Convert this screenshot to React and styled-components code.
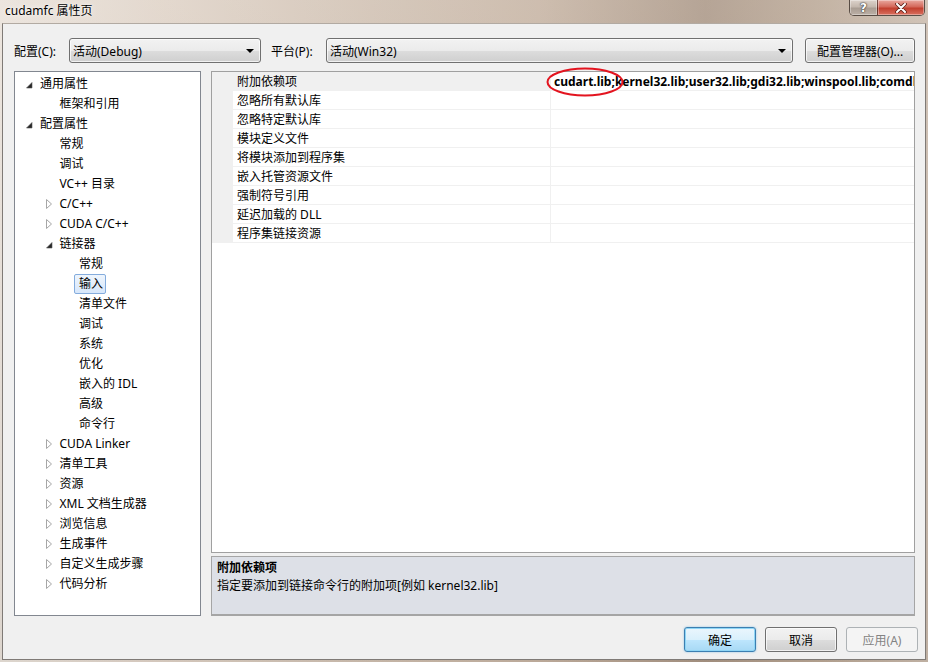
import React from 'react';
import styled, {createGlobalStyle} from 'styled-components';

const Global = createGlobalStyle`
  html, body {
    margin: 0;
    padding: 0;
    width: 928px;
    height: 662px;
    overflow: hidden;
    font-family: "Noto Sans", "Noto Sans CJK SC", sans-serif;
    font-size: 12px;
    color: #000;
  }
`;

const Window = styled.div`
  width: 928px;
  height: 662px;
  display: flex;
  flex-direction: column;
  box-sizing: border-box;
  background:
    linear-gradient(180deg, rgba(255,255,255,0.15) 0%, rgba(0,0,0,0.05) 100%),
    linear-gradient(90deg, #e9e1d9 0%, #ded1c5 18%, #cfbfb0 40%, #c5b2a1 58%, #a99584 76%, #b9a694 88%, #c9b9ab 100%);
`;

const TitleBar = styled.div`
  height: 23px;
  display: flex;
  align-items: flex-start;
  justify-content: space-between;
  flex-shrink: 0;
`;

const Title = styled.div`
  padding: 3px 0 0 5px;
  font-size: 12px;
  line-height: 16px;
  color: #000;
  text-shadow: 0 0 6px rgba(255,255,255,0.9), 0 0 2px rgba(255,255,255,0.9);
`;

const Caption = styled.div`
  display: flex;
  margin-right: 3px;
  border: 1px solid rgba(40,30,25,0.7);
  border-top: 0;
  border-radius: 0 0 5px 5px;
  overflow: hidden;
`;

const CaptionButton = styled.div`
  width: ${p => p.$w}px;
  height: 15px;
  display: flex;
  align-items: center;
  justify-content: center;
  background: ${p => p.$close
    ? 'linear-gradient(180deg, #e9a99f 0%, #d4685a 45%, #c2402f 55%, #d9705f 100%)'
    : 'linear-gradient(180deg, #ddd3cb 0%, #c4b8ae 45%, #a99d93 55%, #bcb0a6 100%)'};
  box-shadow: inset 0 0 0 1px rgba(255,255,255,0.35);
  & + & {
    border-left: 1px solid rgba(40,30,25,0.6);
  }
`;

const HelpGlyph = styled.span`
  font-family: "DejaVu Sans", sans-serif;
  font-weight: bold;
  font-size: 12px;
  line-height: 12px;
  color: #fff;
  text-shadow: 0 0 1px #333, 0 0 1px #333, 0 0 2px #555;
`;

const Client = styled.div`
  flex: 1;
  margin: 0 2px 2px 2px;
  border: 1px solid #7f7a76;
  border-top-color: #b2aaa2;
  background: #f0f0f0;
  display: flex;
  flex-direction: column;
  padding: 14px 10px 7px 11px;
  min-height: 0;
`;

const TopRow = styled.div`
  display: flex;
  align-items: center;
  height: 25px;
`;

const FieldLabel = styled.div`
  width: 55px;
  flex-shrink: 0;
`;

const Combo = styled.div`
  position: relative;
  box-sizing: border-box;
  width: ${p => p.$w ? `${p.$w}px` : 'auto'};
  flex: ${p => p.$w ? '0 0 auto' : '1'};
  height: 25px;
  margin-right: ${p => p.$gap}px;
  border: 1px solid #707070;
  border-radius: 3px;
  padding-left: 3px;
  display: flex;
  align-items: center;
  background: linear-gradient(180deg, #f2f2f2 0%, #ebebeb 50%, #dddddd 50%, #cfcfcf 100%);
  box-shadow: inset 0 0 0 1px rgba(255,255,255,0.7);
`;

const ComboArrow = styled.span`
  position: absolute;
  right: 6px;
  top: 10px;
  width: 0;
  height: 0;
  border-left: 4px solid transparent;
  border-right: 4px solid transparent;
  border-top: 4px solid #000;
`;

const Button = styled.div`
  box-sizing: border-box;
  width: ${p => p.$w}px;
  height: 25px;
  display: flex;
  align-items: center;
  justify-content: center;
  border-radius: 3px;
  border: 1px solid ${p => p.$default ? '#3c7fb1' : p.$disabled ? '#adb2b5' : '#707070'};
  color: ${p => p.$disabled ? '#838383' : '#000'};
  background: ${p => p.$default
    ? 'linear-gradient(180deg, #eaf6fd 0%, #d9f0fc 50%, #bee6fd 50%, #a7d9f5 100%)'
    : p.$disabled
      ? '#f4f4f4'
      : 'linear-gradient(180deg, #f2f2f2 0%, #ebebeb 50%, #dddddd 50%, #cfcfcf 100%)'};
  box-shadow: ${p => p.$default
    ? 'inset 0 0 0 1px #8fd6f6, 0 0 2px rgba(60,160,220,0.6)'
    : p.$disabled ? 'none' : 'inset 0 0 0 1px rgba(255,255,255,0.7)'};
`;

const Main = styled.div`
  display: flex;
  height: 545px;
  margin-top: 8px;
  gap: 10px;
`;

const Tree = styled.div`
  box-sizing: border-box;
  width: 187px;
  flex-shrink: 0;
  border: 1px solid #828790;
  background: #fff;
  padding-top: 2px;
`;

const TreeRow = styled.div`
  height: 20px;
  display: flex;
  align-items: center;
  padding-left: ${p => 9 + p.$level * 19.5}px;
`;

const Toggle = styled.span`
  width: 16px;
  flex-shrink: 0;
  display: flex;
  align-items: center;
  padding-left: 2px;
  box-sizing: border-box;
`;

const TreeText = styled.span`
  white-space: nowrap;
  line-height: 18px;
  ${p => p.$selected && `
    margin-left: -5px;
    padding: 0 2px 0 4px;
    border: 1px solid #84acdd;
    border-radius: 2px;
    background: linear-gradient(180deg, #eef5fd 0%, #d7e7fb 100%);
  `}
`;

const RightCol = styled.div`
  position: relative;
  flex: 1;
  display: flex;
  flex-direction: column;
  gap: 3px;
`;

const Grid = styled.div`
  flex: 1;
  border: 1px solid #a0a0a0;
  background: #fff;
  display: grid;
  grid-template-columns: 21px 318px 1fr;
  grid-auto-rows: 19px;
  align-content: start;
`;

const Gutter = styled.div`
  background: #f0f0f0;
`;

const NameCell = styled.div`
  box-sizing: border-box;
  padding: 2px 0 0 4px;
  line-height: 16px;
  border-bottom: 1px solid #f0f0f0;
  border-right: 1px solid #f0f0f0;
  background: ${p => p.$selected ? '#f0f0f0' : '#fff'};
  white-space: nowrap;
`;

const ValueCell = styled.div`
  box-sizing: border-box;
  padding: 2px 2px 0 3px;
  line-height: 16px;
  border-bottom: 1px solid #f0f0f0;
  white-space: nowrap;
  overflow: hidden;
  font-weight: ${p => p.$bold ? 'bold' : 'normal'};
`;

const Description = styled.div`
  box-sizing: border-box;
  height: 60px;
  flex-shrink: 0;
  border: 1px solid #a5a5a5;
  border-bottom-width: 2px;
  background: #dde0e7;
  padding: 2px 5px;
  line-height: 18px;
`;

const DescTitle = styled.div`
  font-weight: bold;
`;

const Ellipse = styled.svg`
  position: absolute;
  left: 335px;
  top: -4px;
  overflow: visible;
  pointer-events: none;
`;

const ButtonRow = styled.div`
  display: flex;
  justify-content: flex-end;
  gap: 9px;
  margin-top: 11px;
  margin-right: -3px;
`;

const treeItems = [
  {t: '通用属性', l: 0, e: 'open'},
  {t: '框架和引用', l: 1},
  {t: '配置属性', l: 0, e: 'open'},
  {t: '常规', l: 1},
  {t: '调试', l: 1},
  {t: 'VC++ 目录', l: 1},
  {t: 'C/C++', l: 1, e: 'closed'},
  {t: 'CUDA C/C++', l: 1, e: 'closed'},
  {t: '链接器', l: 1, e: 'open'},
  {t: '常规', l: 2},
  {t: '输入', l: 2, sel: true},
  {t: '清单文件', l: 2},
  {t: '调试', l: 2},
  {t: '系统', l: 2},
  {t: '优化', l: 2},
  {t: '嵌入的 IDL', l: 2},
  {t: '高级', l: 2},
  {t: '命令行', l: 2},
  {t: 'CUDA Linker', l: 1, e: 'closed'},
  {t: '清单工具', l: 1, e: 'closed'},
  {t: '资源', l: 1, e: 'closed'},
  {t: 'XML 文档生成器', l: 1, e: 'closed'},
  {t: '浏览信息', l: 1, e: 'closed'},
  {t: '生成事件', l: 1, e: 'closed'},
  {t: '自定义生成步骤', l: 1, e: 'closed'},
  {t: '代码分析', l: 1, e: 'closed'},
];

const props = [
  '附加依赖项',
  '忽略所有默认库',
  '忽略特定默认库',
  '模块定义文件',
  '将模块添加到程序集',
  '嵌入托管资源文件',
  '强制符号引用',
  '延迟加载的 DLL',
  '程序集链接资源',
];

const deps = 'cudart.lib;kernel32.lib;user32.lib;gdi32.lib;winspool.lib;comdlg32.lib;advapi32.lib;shell32.lib;ole32.lib;oleaut32.lib;uuid.lib;odbc32.lib;odbccp32.lib;%(AdditionalDependencies)';

const Arrow = ({state}) => {
    if (state === 'open') {
        return (
            <svg width="7" height="7" viewBox="0 0 7 7" style={{marginTop: 2}}>
                <path d="M6 0.5 L6 6 L0.5 6 Z" fill="#262626" stroke="#595959" strokeWidth="0.6"/>
            </svg>
        );
    }
    if (state === 'closed') {
        return (
            <svg width="7" height="10" viewBox="0 0 7 10">
                <path d="M0.5 0.5 L5.5 5 L0.5 9.5 Z" fill="#fff" stroke="#a6a6a6" strokeWidth="1"/>
            </svg>
        );
    }
    return null;
};

const App = () => {
    return (
        <>
            <Global/>
            <Window>
                <TitleBar>
                    <Title>cudamfc 属性页</Title>
                    <Caption>
                        <CaptionButton $w={27}><HelpGlyph>?</HelpGlyph></CaptionButton>
                        <CaptionButton $w={46} $close>
                            <svg width="12" height="10" viewBox="0 0 12 10">
                                <path d="M2 1 L10 9 M10 1 L2 9" stroke="#5a2018" strokeWidth="3.6" strokeLinecap="round"/>
                                <path d="M2 1 L10 9 M10 1 L2 9" stroke="#fff" strokeWidth="2" strokeLinecap="round"/>
                            </svg>
                        </CaptionButton>
                    </Caption>
                </TitleBar>
                <Client>
                    <TopRow>
                        <FieldLabel>配置(C):</FieldLabel>
                        <Combo $w={192} $gap={10}>活动(Debug)<ComboArrow/></Combo>
                        <FieldLabel>平台(P):</FieldLabel>
                        <Combo $gap={12}>活动(Win32)<ComboArrow/></Combo>
                        <Button $w={110}>配置管理器(O)...</Button>
                    </TopRow>
                    <Main>
                        <Tree>
                            {treeItems.map((it, i) => (
                                <TreeRow key={i} $level={it.l}>
                                    <Toggle><Arrow state={it.e}/></Toggle>
                                    <TreeText $selected={it.sel}>{it.t}</TreeText>
                                </TreeRow>
                            ))}
                        </Tree>
                        <RightCol>
                            <Grid>
                                {props.map((name, i) => (
                                    <React.Fragment key={name}>
                                        <Gutter/>
                                        <NameCell $selected={i === 0}>{name}</NameCell>
                                        <ValueCell $bold={i === 0}>{i === 0 ? deps : ''}</ValueCell>
                                    </React.Fragment>
                                ))}
                            </Grid>
                            <Description>
                                <DescTitle>附加依赖项</DescTitle>
                                <div>指定要添加到链接命令行的附加项[例如 kernel32.lib]</div>
                            </Description>
                            <Ellipse width="78" height="30" viewBox="0 0 78 30">
                                <ellipse cx="39" cy="15" rx="37.5" ry="13.5" fill="none" stroke="#e3141f" strokeWidth="2"/>
                            </Ellipse>
                        </RightCol>
                    </Main>
                    <ButtonRow>
                        <Button $w={72} $default>确定</Button>
                        <Button $w={72}>取消</Button>
                        <Button $w={72} $disabled>应用(A)</Button>
                    </ButtonRow>
                </Client>
            </Window>
        </>
    );
};

export default App;
